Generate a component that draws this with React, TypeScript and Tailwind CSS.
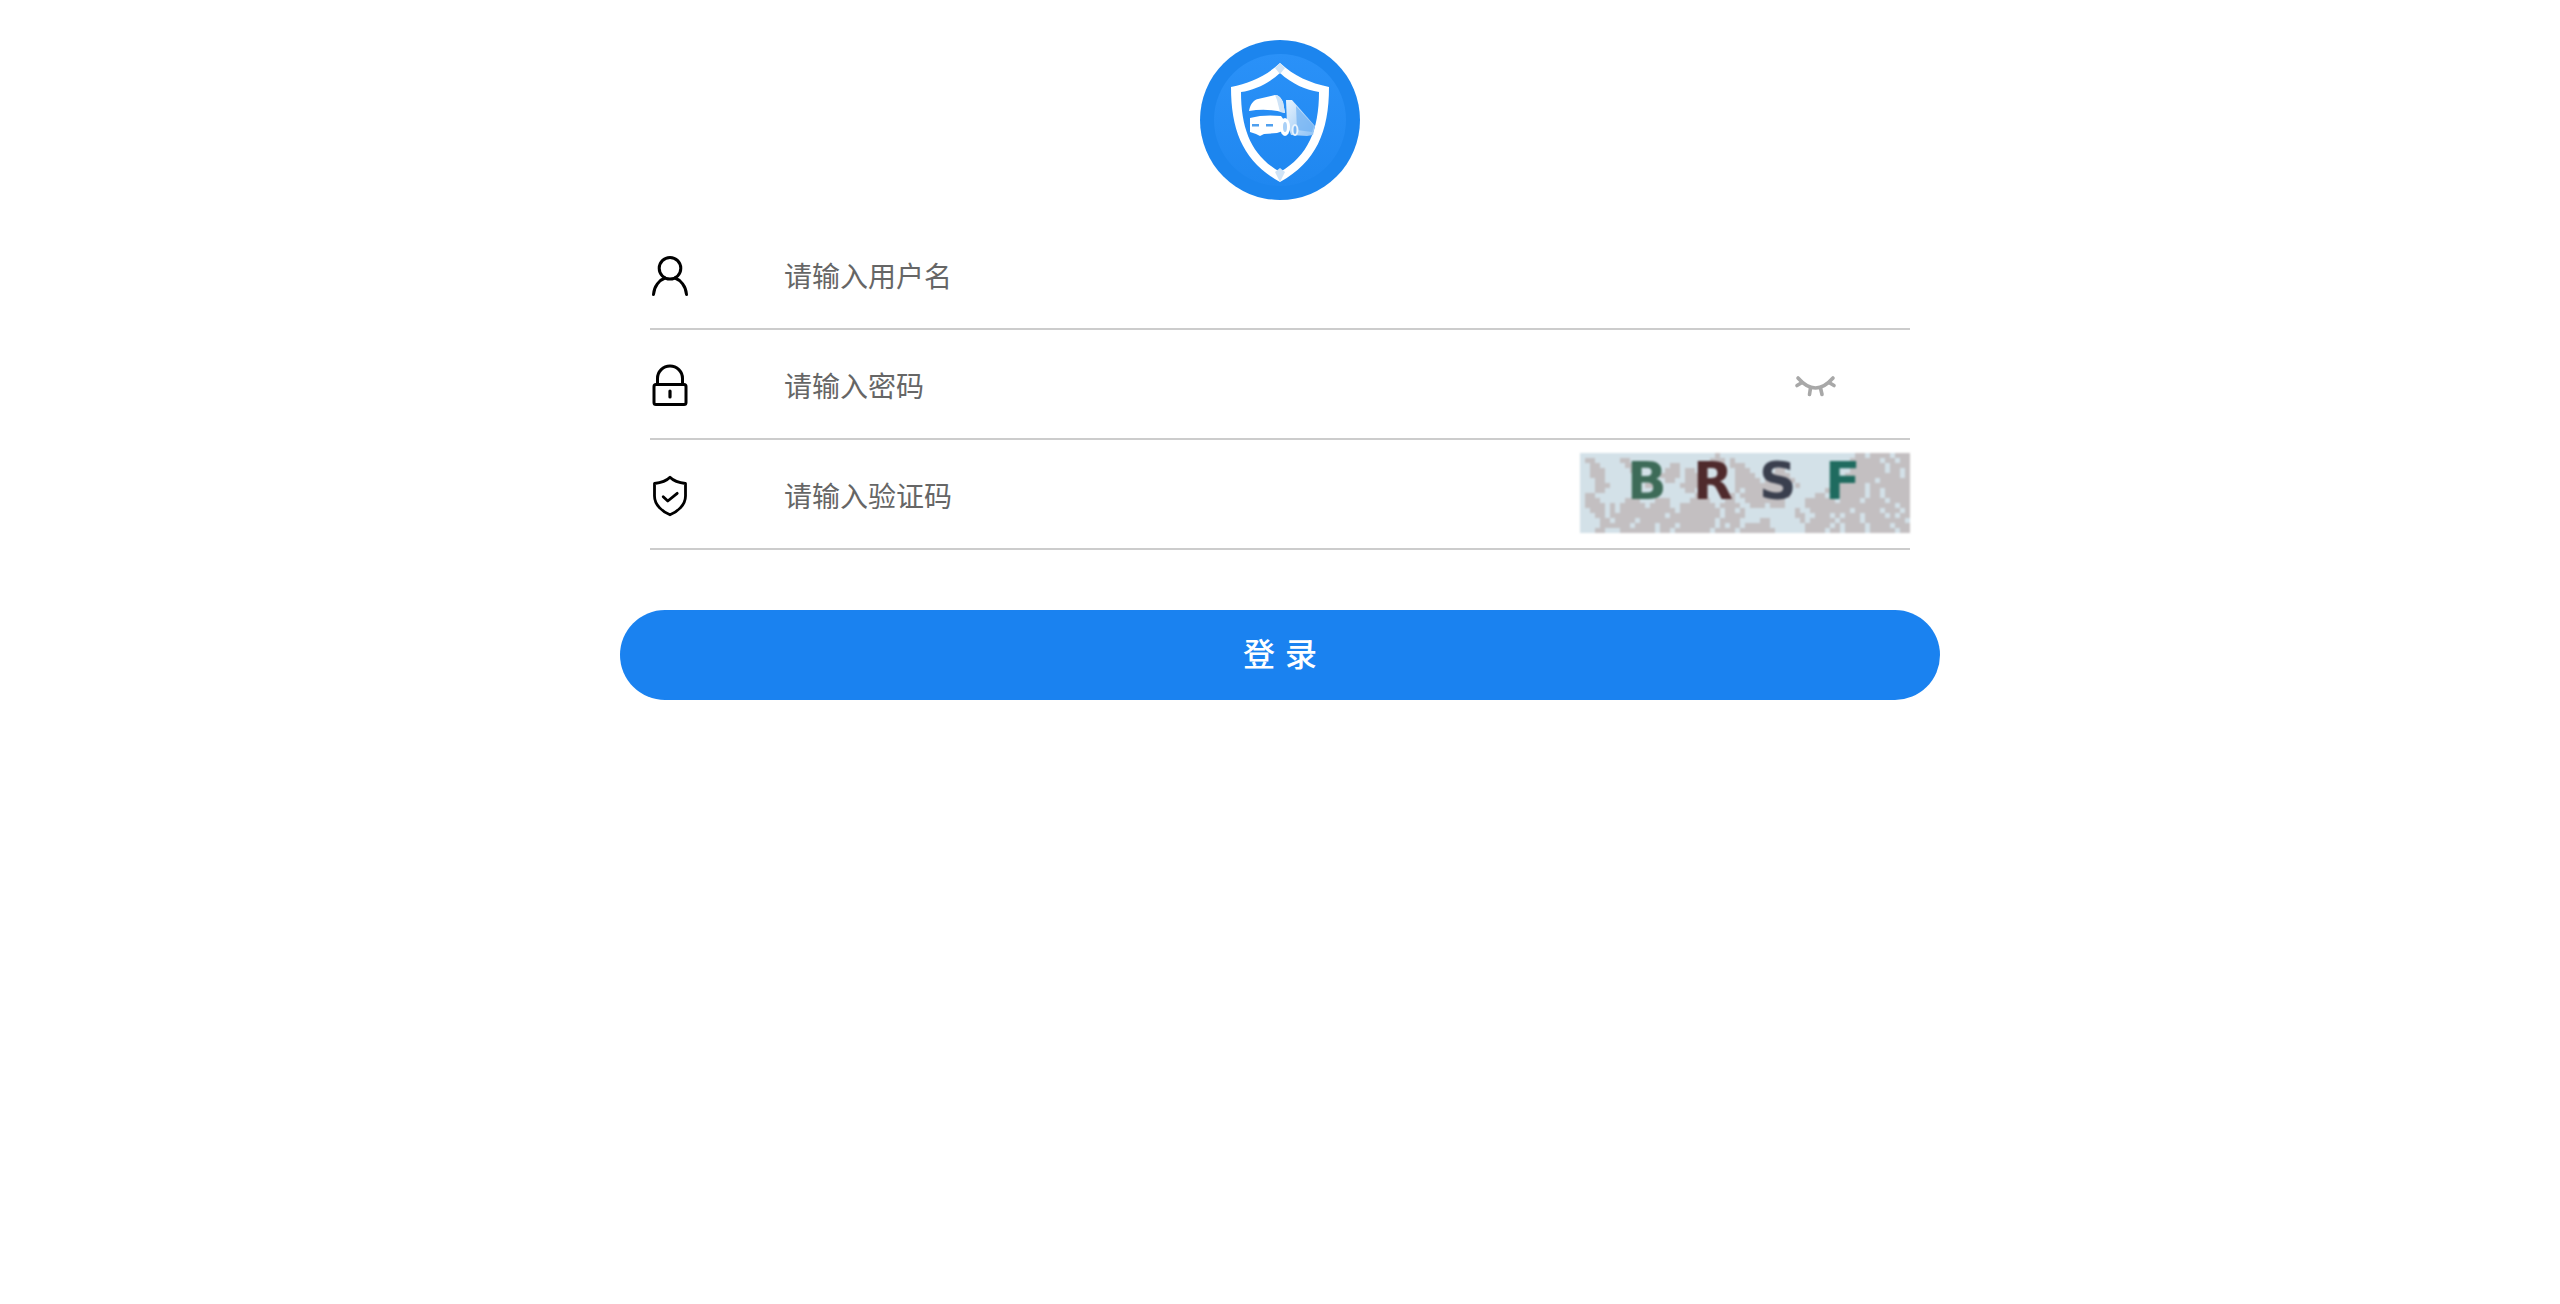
import { useState } from 'react';

// captcha background noise, one char per 5px cell
const noise = [
  '...........................#...........................##.####.###',
  '.##.....##................###.#.......................######.##.##',
  '..##.....###......##.......##.###.....................#######.#####',
  '..###.....#......###.##.....#..###.....##.............#######.##.##',
  '..###...........####.###.......####...####...........###########.#',
  '...##.........#..##..###.......#####.######.........#######.######',
  '...###.......##.....####.......###########.#.......######.########',
  '...##................##........#.#########.......########.##.#####',
  '.##....................##.....#.##########.....##.#######.##.#####',
  '.###.....###...###....####...##..########....######.####.####.####',
  '.####.#.#####.####..#######.####..###.###....##################.##',
  '..###.#.###########.########.##.#..........#..########.#####.###.#',
  '...##.###########.##########.####..........##..###.#.###.####.#.##',
  '....##.####.###############.####....##......#.#####.####.########',
  '....######.####.###.#######.#.##.#####.......#####.#.####.####.###',
  '...##...#######.##.#######.####.#######......####.##.####.#####.##',
];

function Logo() {
  return (
    <svg width="160" height="160" viewBox="0 0 160 160">
      <defs>
        <linearGradient id="logoBg" x1="0" y1="0" x2="0" y2="1">
          <stop offset="0" stopColor="#2a91f8" />
          <stop offset="1" stopColor="#1f87f0" />
        </linearGradient>
        <linearGradient id="trailer" x1="0" y1="0" x2="1" y2="1">
          <stop offset="0" stopColor="#e8f3fd" />
          <stop offset="1" stopColor="#8cc1f5" />
        </linearGradient>
      </defs>
      <circle cx="80" cy="80" r="80" fill="#1c85ee" />
      <circle cx="80" cy="80" r="66" fill="url(#logoBg)" />
      <path
        d="M80 23C66 36 50 43 31 47C31 92 44 122 80 142C116 122 129 92 129 47C110 43 94 36 80 23ZM80 33C92 44 106 50 119 52C119 90 108 116 80 132C52 116 41 90 41 52C54 50 68 44 80 33Z"
        fill="#fff"
        fillRule="evenodd"
      />
      <path d="M80 23L75 28L80 34L85 28Z" fill="#cfe3f6" />
      <path d="M80 142L75 132L80 128L85 132Z" fill="#cfe3f6" />
      {/* trailer */}
      <path d="M86 60L92 60L115 86L113 95L107 96L91 95L87 84Z" fill="url(#trailer)" />
      <path d="M96 66L114 86L112 92L97 90Z" fill="#6fb0f2" opacity="0.7" />
      {/* cab */}
      <path d="M49 71C50 65 53 60 58 59L75 55C79 55 81 58 83 62L85 73C72 69 60 69 49 71Z" fill="#fff" />
      <path d="M75 55C79 55 81 58 83 62L85 73L80 72L77 60Z" fill="#cfe3f6" />
      <path d="M50 78C60 75 72 75 81 76L84 80L83 91L77 93L64 94L60 96L56 94L50 92Z" fill="#fff" />
      <path d="M52 84H59V86.5H52ZM66 84H73V86.5H66Z" fill="#4f9fee" />
      <ellipse cx="85" cy="87" rx="5" ry="9" fill="#fff" />
      <ellipse cx="85" cy="87" rx="2" ry="5" fill="#a9d0f7" />
      <ellipse cx="95" cy="90" rx="3.5" ry="6" fill="#e8f3fd" />
      <ellipse cx="95" cy="90" rx="1.5" ry="4" fill="#79b6f4" />
    </svg>
  );
}

function UserIcon() {
  return (
    <svg className="overflow-visible" width="40" height="44" viewBox="0 0 40 44" fill="none" stroke="#000" strokeWidth="3" strokeLinecap="round">
      <circle cx="20" cy="16.3" r="10.8" />
      <path d="M3.5 42.5C4 34 9.5 28 15 26M36.5 42.5C36 34 30.5 28 25 26" />
    </svg>
  );
}

function LockIcon() {
  return (
    <svg className="overflow-visible" width="40" height="44" viewBox="0 0 40 44" fill="none" stroke="#000" strokeWidth="3" strokeLinecap="round" strokeLinejoin="round">
      <rect x="4" y="22.5" width="32" height="20" rx="2" />
      <path d="M7.5 22v-5.5a12.5 12.5 0 0 1 25 0v5.5" />
      <path d="M20 29V35" strokeWidth="3.2" />
    </svg>
  );
}

function ShieldIcon() {
  return (
    <svg className="overflow-visible" width="40" height="44" viewBox="0 0 40 44" fill="none" stroke="#000" strokeWidth="2.8" strokeLinecap="round" strokeLinejoin="round">
      <path d="M20 5.2C16.5 8.8 9 11 4.5 11.5V24C4.5 33 12.5 39.8 20 42.8C27.5 39.8 35.5 33 35.5 24V11.5C31 11 23.5 8.8 20 5.2Z" />
      <path d="M13.2 24.7L17.8 29L27.2 21.3" />
    </svg>
  );
}

function EyeOff() {
  return (
    <svg className="mr-[72px] shrink-0" width="44" height="26" viewBox="0 0 44 26" fill="none" stroke="#a8a8a8" strokeWidth="3.6" strokeLinecap="round">
      <path d="M4 7Q21.5 27 39 7" />
      <path d="M8 11.5L3 14.5M35 11.5L40 14.5M16.5 17L15.5 23.5M26.5 17L28 23.5" />
    </svg>
  );
}

function Captcha() {
  return (
    <svg className="mt-[13px] shrink-0 self-start overflow-visible blur-[1px]" width="330" height="80" viewBox="0 0 330 80">
      <rect width="330" height="80" fill="#d3e1e8" />
      {noise.map((row, y) =>
        row.split('').map((c, x) =>
          c === '#' && x < 66 ? <rect key={`${x}-${y}`} x={x * 5} y={y * 5} width="5" height="5" fill="#c3bfc1" /> : null,
        ),
      )}
      <g fontFamily="'DejaVu Sans', sans-serif" fontWeight="700" fontSize="52">
        <text x="47" y="46" fill="#3d6b58">B</text>
        <text x="113" y="46" fill="#4f2a2c">R</text>
        <text x="179" y="46" fill="#3a3f4e">S</text>
        <text x="245" y="46" fill="#1f6b5f">F</text>
      </g>
    </svg>
  );
}

export default function App() {
  const [username, setUsername] = useState('');
  const [password, setPassword] = useState('');
  const [code, setCode] = useState('');

  return (
    <div className="min-h-screen bg-white font-['Noto_Sans_CJK_SC','Noto_Sans',sans-serif]">
      <div className="flex justify-center pt-10">
        <Logo />
      </div>

      <form className="mx-auto mt-5 w-[1320px]" onSubmit={(e) => e.preventDefault()}>
        <div className="mx-[30px]">
          <div className="flex h-[110px] items-center border-b-2 border-[#cccccc]">
            <div className="w-[134px] shrink-0">
              <UserIcon />
            </div>
            <input
              value={username}
              onChange={(e) => setUsername(e.target.value)}
              placeholder="请输入用户名"
              className="min-w-0 flex-1 pt-px text-[28px] text-[#333] outline-none placeholder:text-[#666]"
            />
          </div>
          <div className="flex h-[110px] items-center border-b-2 border-[#cccccc]">
            <div className="w-[134px] shrink-0">
              <LockIcon />
            </div>
            <input
              type="password"
              value={password}
              onChange={(e) => setPassword(e.target.value)}
              placeholder="请输入密码"
              className="min-w-0 flex-1 pt-px text-[28px] text-[#333] outline-none placeholder:text-[#666]"
            />
            <EyeOff />
          </div>
          <div className="flex h-[110px] items-center border-b-2 border-[#cccccc]">
            <div className="w-[134px] shrink-0">
              <ShieldIcon />
            </div>
            <input
              value={code}
              onChange={(e) => setCode(e.target.value)}
              placeholder="请输入验证码"
              className="min-w-0 flex-1 pt-px text-[28px] text-[#333] outline-none placeholder:text-[#666]"
            />
            <Captcha />
          </div>
        </div>

        <button
          type="submit"
          className="mt-[60px] h-[90px] w-full rounded-[45px] bg-[#1a82f0] pb-[6px] pl-[10px] text-[32px] font-medium tracking-[10px] text-white"
        >
          登录
        </button>
      </form>
    </div>
  );
}
